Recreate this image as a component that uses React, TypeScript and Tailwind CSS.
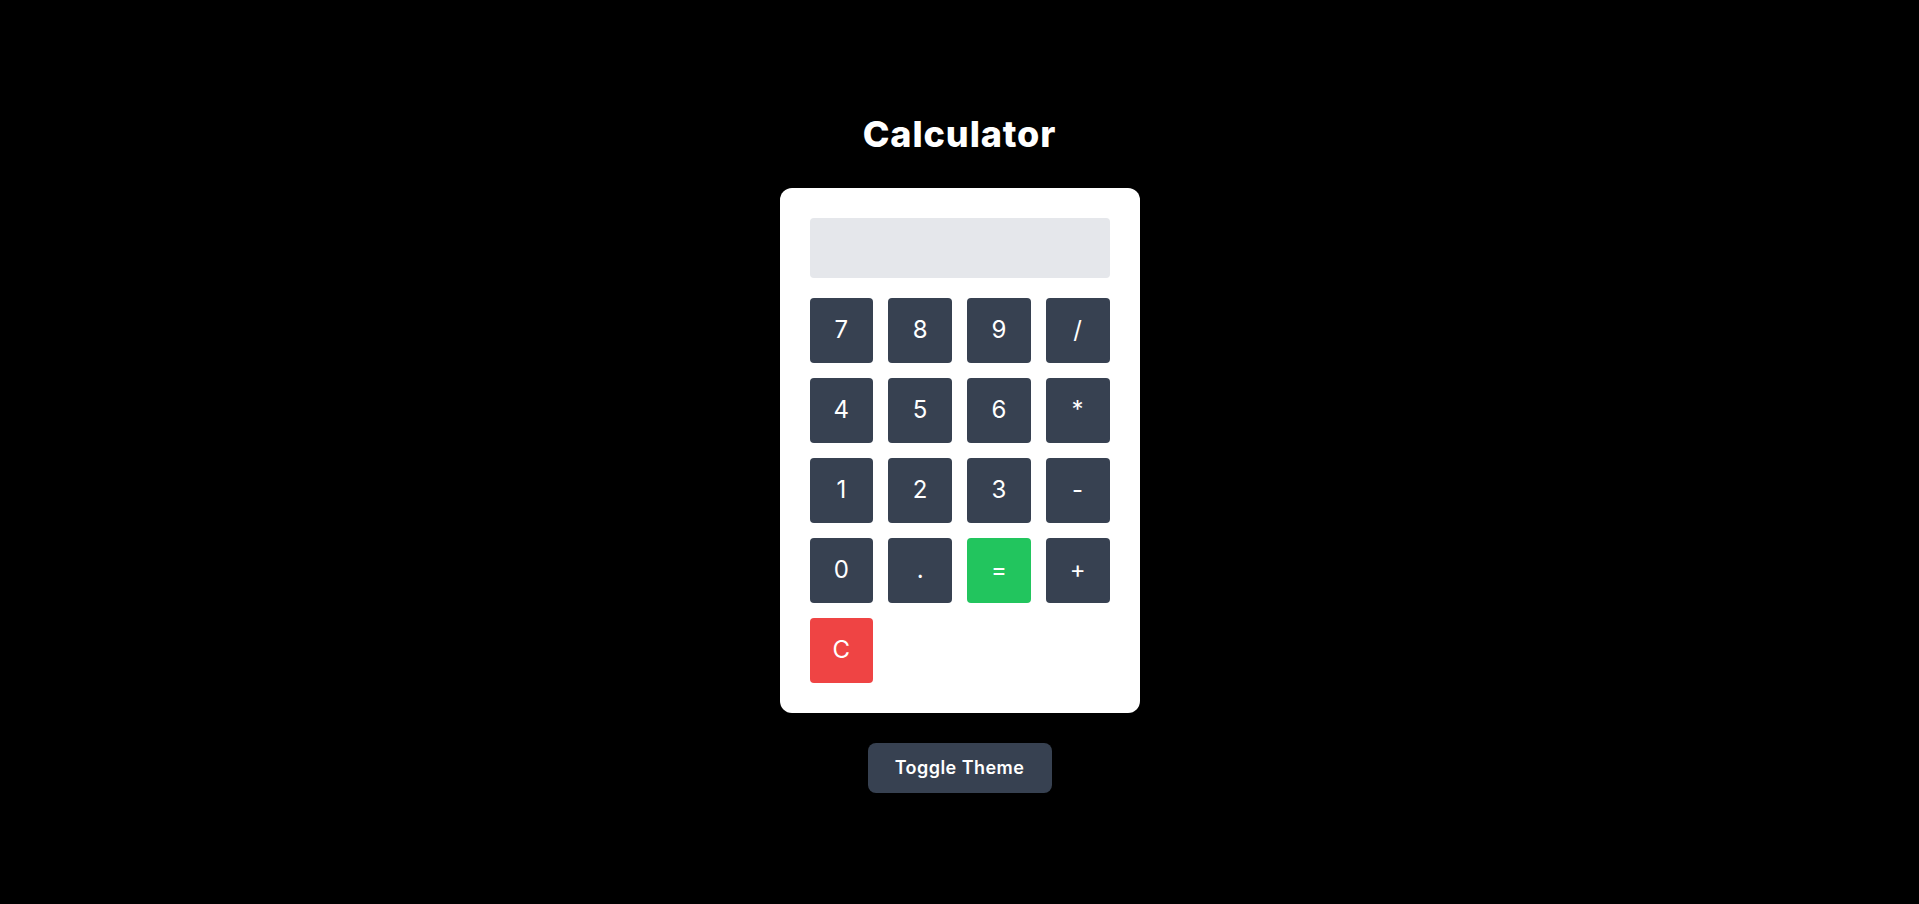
const keys = ["7", "8", "9", "/", "4", "5", "6", "*", "1", "2", "3", "-", "0", ".", "=", "+", "C"];

function keyColor(k: string) {
  if (k === "=") return "bg-[#22c55e]";
  if (k === "C") return "bg-[#ef4444]";
  return "bg-[#374151]";
}

export default function App() {
  return (
    <div className="min-h-screen bg-black flex flex-col items-center justify-center font-['Inter',sans-serif]">
      <h1 className="text-[36px] leading-[44px] font-extrabold text-white mb-8 tracking-wide">Calculator</h1>

      <div className="w-[360px] bg-white rounded-xl p-[30px]">
        <div className="h-[60px] bg-[#e5e7eb] rounded mb-5" />
        <div className="grid grid-cols-4 gap-[15px]">
          {keys.map((k) => (
            <button
              key={k}
              className={`h-[65px] rounded text-white text-[24px] font-normal flex items-center justify-center ${keyColor(k)}`}
            >
              {k}
            </button>
          ))}
        </div>
      </div>

      <button className="mt-[30px] h-[50px] w-[184px] rounded-lg bg-[#374151] text-white text-lg font-semibold tracking-wide">
        Toggle Theme
      </button>
    </div>
  );
}
